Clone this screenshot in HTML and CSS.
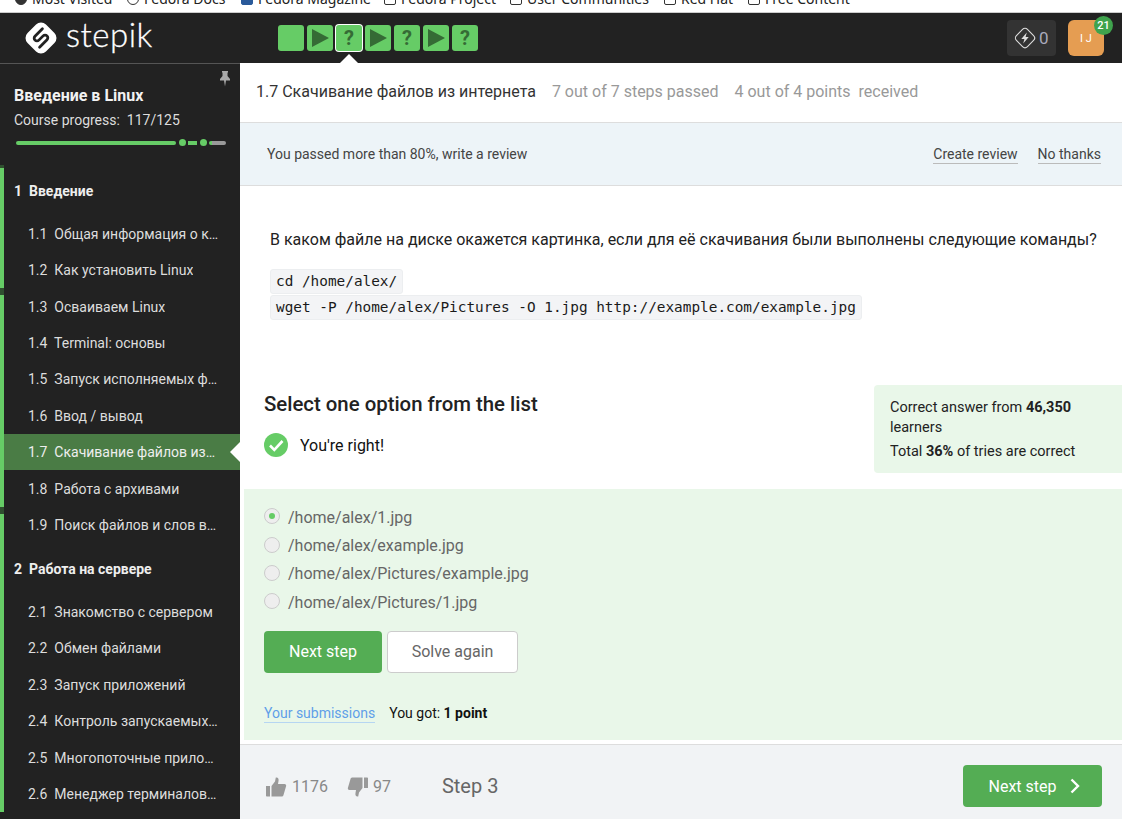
FILE: index.html
```html
<!DOCTYPE html>
<html lang="en">
<head>
<meta charset="utf-8">
<title>Stepik</title>
<link rel="stylesheet" href="styles.css">
</head>
<body>
<div class="bookmarks">
  <span class="bm bm-1"><i class="bm-ico solid"></i>Most Visited</span>
  <span class="bm bm-2"><i class="bm-ico round"></i>Fedora Docs</span>
  <span class="bm bm-3"><i class="bm-ico blue"></i>Fedora Magazine</span>
  <span class="bm bm-4"><i class="bm-ico box"></i>Fedora Project</span>
  <span class="bm bm-5"><i class="bm-ico box"></i>User Communities</span>
  <span class="bm bm-6"><i class="bm-ico box"></i>Red Hat</span>
  <span class="bm bm-7"><i class="bm-ico box"></i>Free Content</span>
</div>
<header class="topbar">
  <div class="logo">
    <svg class="logo-mark" width="32" height="32" viewBox="0 0 32 32">
      <rect x="3" y="3" width="26" height="26" rx="7" transform="rotate(45 16 16)" fill="#fff"/>
      <path d="M7.500 -5.500 H-3 a2.750 2.750 0 0 0 0 5.500 H3 a2.750 2.750 0 0 1 0 5.500 H-7.500" fill="none" stroke="#222" stroke-width="2.800" stroke-linecap="round" transform="translate(16 16) rotate(-45)"/>
    </svg>
    <span class="logo-text">stepik</span>
  </div>
  <nav class="steps">
    <span class="step"></span>
    <span class="step"><svg width="20" height="20" viewBox="0 0 20 20"><path d="M2 1 L19 10 L2 19 Z" fill="#356b35"/></svg></span>
    <span class="step current">?</span>
    <span class="step"><svg width="20" height="20" viewBox="0 0 20 20"><path d="M2 1 L19 10 L2 19 Z" fill="#356b35"/></svg></span>
    <span class="step">?</span>
    <span class="step"><svg width="20" height="20" viewBox="0 0 20 20"><path d="M2 1 L19 10 L2 19 Z" fill="#356b35"/></svg></span>
    <span class="step">?</span>
  </nav>
  <div class="top-right">
    <div class="energy">
      <svg width="22" height="22" viewBox="0 0 22 22" fill="none" stroke="#ddd" stroke-width="1.100">
        <rect x="3.200" y="3.200" width="15.600" height="15.600" rx="3.500" transform="rotate(45 11 11)"/>
        <path d="M12.800 5.500 L7.300 12 L10.400 12 L9.200 16.500 L14.700 10 L11.600 10 Z" fill="#ddd" stroke="none"/>
      </svg>
      <span>0</span>
    </div>
    <div class="avatar">I J<span class="badge">21</span></div>
  </div>
</header>
<div class="layout">
  <aside class="sidebar">
    <svg class="pin" width="12" height="16" viewBox="0 0 12 16"><path d="M3 0 H9 V1.500 H8.500 V5 L11 8 V9.500 H7 L6 15.500 L5 9.500 H1 V8 L3.500 5 V1.500 H3 Z" fill="#aaa"/></svg>
    <div class="course">
      <h1 class="course-title">Введение в Linux</h1>
      <div class="course-progress">Course progress:&nbsp; 117/125</div>
      <div class="progress">
        <span class="pg pg-a"></span><span class="dot"></span><span class="pg pg-b"></span><span class="dot"></span><span class="pg pg-c"></span><span class="pg pg-d"></span>
      </div>
    </div>
    <ul class="toc">
      <li class="sec first">1&nbsp; Введение</li>
      <li class="row"><span>1.1&nbsp; Общая информация о курсе</span></li>
      <li class="row split"><span>1.2&nbsp; Как установить Linux</span></li>
      <li class="row"><span>1.3&nbsp; Осваиваем Linux</span></li>
      <li class="row"><span>1.4&nbsp; Terminal: основы</span></li>
      <li class="row"><span>1.5&nbsp; Запуск исполняемых файлов</span></li>
      <li class="row"><span>1.6&nbsp; Ввод / вывод</span></li>
      <li class="row active"><span>1.7&nbsp; Скачивание файлов из интернета</span></li>
      <li class="row split"><span>1.8&nbsp; Работа с архивами</span></li>
      <li class="row"><span>1.9&nbsp; Поиск файлов и слов в них</span></li>
      <li class="sec">2&nbsp; Работа на сервере</li>
      <li class="row"><span>2.1&nbsp; Знакомство с сервером</span></li>
      <li class="row"><span>2.2&nbsp; Обмен файлами</span></li>
      <li class="row"><span>2.3&nbsp; Запуск приложений</span></li>
      <li class="row"><span>2.4&nbsp; Контроль запускаемых программ</span></li>
      <li class="row"><span>2.5&nbsp; Многопоточные приложения</span></li>
      <li class="row"><span>2.6&nbsp; Менеджер терминалов tmux</span></li>
    </ul>
  </aside>
  <main class="main">
    <div class="titlebar">
      <span class="lesson">1.7 Скачивание файлов из интернета</span>
      <span class="meta">7 out of 7 steps passed</span>
      <span class="meta">4 out of 4 points&nbsp; received</span>
    </div>
    <div class="banner">
      <span>You passed more than 80%, write a review</span>
      <div class="banner-links"><a>Create review</a><a>No thanks</a></div>
    </div>
    <section class="question">
      <p class="q-text">В каком файле на диске окажется картинка, если для её скачивания были выполнены следующие команды?</p>
      <div class="code">cd /home/alex/</div>
      <div class="code">wget -P /home/alex/Pictures -O 1.jpg http://example.com/example.jpg</div>
    </section>
    <section class="quiz-head">
      <div>
        <h2 class="quiz-title">Select one option from the list</h2>
        <div class="right">
          <svg width="24" height="24" viewBox="0 0 24 24"><circle cx="12" cy="12" r="12" fill="#66cc66"/><path d="M6 12.500 L10.300 16.800 L18.500 8" fill="none" stroke="#fff" stroke-width="2.600"/></svg>
          <span>You're right!</span>
        </div>
      </div>
      <div class="stats">
        <p>Correct answer from <b>46,350</b> learners</p>
        <p class="stats-2">Total <b>36%</b> of tries are correct</p>
      </div>
    </section>
    <section class="answer">
      <div class="opt"><i class="radio on"></i>/home/alex/1.jpg</div>
      <div class="opt"><i class="radio"></i>/home/alex/example.jpg</div>
      <div class="opt"><i class="radio"></i>/home/alex/Pictures/example.jpg</div>
      <div class="opt"><i class="radio"></i>/home/alex/Pictures/1.jpg</div>
      <div class="actions">
        <button class="btn primary">Next step</button>
        <button class="btn ghost">Solve again</button>
      </div>
      <div class="result"><a>Your submissions</a><span>You got: <b>1 point</b></span></div>
    </section>
    <footer class="foot">
      <svg class="thumb" width="22" height="22" viewBox="0 0 22 22"><path d="M1 10 H5 V20.500 H1.800 a.8 .8 0 0 1 -.8 -.8 Z M6.500 10 L10 5.500 L10.800 1.500 C13 1 14 3 13.500 5 L13 8 H19.500 C21 8 21.500 9.500 21 10.500 L18.500 19 C18.200 20 17.500 20.500 16.500 20.500 H6.500 Z" fill="#999"/></svg>
      <span class="count">1176</span>
      <svg class="thumb down" width="22" height="22" viewBox="0 0 22 22"><path d="M21 12 H17 V1.500 H20.200 a.8 .8 0 0 1 .8 .8 Z M15.500 12 L12 16.500 L11.200 20.500 C9 21 8 19 8.500 17 L9 14 H2.500 C1 14 .5 12.500 1 11.500 L3.500 3 C3.800 2 4.500 1.500 5.500 1.500 H15.500 Z" fill="#999"/></svg>
      <span class="count tight">97</span>
      <span class="step-no">Step 3</span>
      <button class="btn primary next">Next step
        <svg width="12" height="16" viewBox="0 0 12 16"><path d="M2.500 1.500 L9 8 L2.500 14.500" fill="none" stroke="#fff" stroke-width="2.400"/></svg>
      </button>
    </footer>
  </main>
</div>
</body>
</html>
```
FILE: styles.css
```css
* { box-sizing: border-box; }
html, body { margin: 0; padding: 0; }
body {
  width: 1122px;
  height: 819px;
  overflow: hidden;
  font-family: Roboto, "Liberation Sans", sans-serif;
  background: #fff;
  color: #222;
}

/* browser bookmarks strip, cut by the screenshot */
.bookmarks {
  height: 13px;
  border-bottom: 1px solid #ccc;
  background: #fff;
  overflow: hidden;
  display: flex;
  font: 14px/14px "Noto Sans", sans-serif;
  color: #222;
  padding-left: 15px;
}
.bm { display: flex; align-items: center; gap: 5px; margin-top: -8px; height: 14px; white-space: nowrap; }
.bm-ico { width: 12px; height: 12px; border: 1px solid #333; border-radius: 2px; display: block; }
.bm-ico.round { border-radius: 50%; }
.bm-ico.solid { background: #333; border-radius: 50%; }
.bm-ico.blue { background: #2a5a9a; border-color: #2a5a9a; }
.bm-1 { width: 112px; }
.bm-2 { width: 114px; }
.bm-3 { width: 143px; }
.bm-4 { width: 126px; }
.bm-5 { width: 154px; }
.bm-6 { width: 84px; }

/* top bar */
.topbar {
  height: 50px;
  background: #222;
  display: flex;
  align-items: center;
  position: relative;
}
.logo { display: flex; align-items: center; width: 278px; padding-left: 25px; gap: 9px; }
.logo-mark { display: block; margin-top: -1px; }
.logo-text { font: 300 33px/1 Lato, sans-serif; color: #fff; letter-spacing: .5px; margin-top: -7px; -webkit-text-stroke: .3px #fff; }
.steps { display: flex; gap: 3px; }
.step {
  width: 26px;
  height: 26px;
  background: #66cc66;
  border-radius: 3px;
  display: flex;
  align-items: center;
  justify-content: center;
  font-size: 20px;
  font-weight: 700;
  color: #356b35;
}
.step.current { box-shadow: 0 0 0 1px #fff; position: relative; }
.step.current::after {
  content: "";
  position: absolute;
  left: 3px;
  top: 29px;
  border: 10px solid transparent;
  border-top: 0;
  border-bottom-color: #fff;
}
.top-right { margin-left: auto; display: flex; gap: 12px; padding-right: 18px; }
.energy {
  width: 49px;
  height: 36px;
  background: #333;
  border-radius: 4px;
  display: flex;
  align-items: center;
  padding-left: 7px;
  gap: 3px;
  color: #aab;
  font-size: 17px;
}
.avatar {
  width: 36px;
  height: 36px;
  border-radius: 6px;
  background: #e59d52;
  color: #fff;
  font-size: 11px;
  display: flex;
  align-items: center;
  justify-content: center;
  position: relative;
}
.badge {
  position: absolute;
  top: -4px;
  right: -9px;
  width: 19px;
  height: 19px;
  border-radius: 50%;
  background: #3fa34d;
  font-size: 11px;
  font-weight: 500;
  display: flex;
  align-items: center;
  justify-content: center;
}

/* page columns */
.layout { display: flex; height: 756px; }

/* sidebar */
.sidebar {
  width: 240px;
  flex: none;
  background: #222;
  color: #eee;
  border-top: 1px solid #555;
  position: relative;
  overflow: hidden;
}
.pin { position: absolute; top: 7px; right: 9px; }
.course { padding: 22px 14px 0; height: 101px; }
.course-title { margin: 0; font-size: 16px; line-height: 19px; font-weight: 700; color: #f2f2f2; }
.course-progress { margin-top: 5px; font-size: 14px; line-height: 20px; color: #ddd; }
.progress { display: flex; align-items: center; margin: 9px 0 0 2px; height: 7px; }
.pg { height: 4px; border-radius: 2px; background: #66cc66; }
.pg-a { width: 160px; }
.dot { width: 7px; height: 7px; border-radius: 50%; background: #66cc66; margin: 0 2.500px; }
.pg-b { width: 9px; border-radius: 0; }
.pg-c { width: 3px; border-radius: 2px 0 0 2px; }
.pg-d { width: 14px; background: #999; border-radius: 0 2px 2px 0; }
.toc { list-style: none; margin: 0; padding: 0; border-left: 4px solid #66cc66; }
.toc .sec {
  height: 50.700px;
  padding: 16.700px 0 0 10px;
  font-size: 14px;
  line-height: 18px;
  font-weight: 700;
  color: #eee;
  position: relative;
}
.toc .sec.first { padding-top: 17px; }
.toc .sec.first::before {
  content: "";
  position: absolute;
  left: -4px;
  top: 0;
  width: 4px;
  height: 3px;
  background: #2f4f2f;
}
.row {
  height: 36.400px;
  display: flex;
  align-items: center;
  padding: 0 21px 0 24px;
  font-size: 14px;
  color: #ddd;
  position: relative;
}
.row > span { white-space: nowrap; overflow: hidden; text-overflow: ellipsis; }
.row.split::after {
  content: "";
  position: absolute;
  left: -4px;
  bottom: -7px;
  width: 4px;
  height: 7px;
  background: #2f4f2f;
}
.row.active { background: #4a7c45; color: #eee; padding-right: 24px; }
.row.active::before {
  content: "";
  position: absolute;
  right: 0;
  top: 8px;
  border: 10px solid transparent;
  border-left: 0;
  border-right-color: #fff;
}

/* main column */
.main { flex: 1; min-width: 0; display: flex; flex-direction: column; overflow: hidden; }
.titlebar {
  height: 60px;
  border-bottom: 1px solid #ddd;
  display: flex;
  align-items: center;
  padding: 0 16px 2px;
  gap: 16px;
  font-size: 16px;
}
.lesson { color: #333; }
.meta { color: #999; }
.banner {
  height: 63px;
  background: #edf4f8;
  border-bottom: 1px solid #ddd;
  display: flex;
  align-items: center;
  justify-content: space-between;
  padding: 0 21px 0 27px;
  font-size: 14px;
  color: #444;
}
.banner-links { display: flex; gap: 20px; margin-top: 2px; }
.banner-links a { border-bottom: 1px solid #bbb; line-height: 16px; padding-bottom: 1px; }
.question { padding: 44px 0 0 30px; height: 199px; }
.q-text { margin: 0 0 19px; font-size: 16px; line-height: 20px; color: #222; white-space: nowrap; }
.code {
  width: fit-content;
  height: 25px;
  margin-bottom: 1px;
  padding: 0 5px;
  background: #f3f4f6;
  border: 1px solid #eceef0;
  border-radius: 3px;
  font: 14.380px/23px "DejaVu Sans Mono", monospace;
  color: #1a1a1a;
  white-space: pre;
}
.quiz-head { display: flex; justify-content: space-between; align-items: flex-start; padding-left: 24px; height: 104px; }
.quiz-title { margin: 6px 0 0; font-size: 20.370px; line-height: 26px; font-weight: 500; color: #222; }
.right { display: flex; align-items: center; gap: 12px; margin-top: 16px; font-size: 16px; color: #111; }
.right svg { display: block; }
.stats {
  width: 248px;
  height: 88px;
  background: #e9f7e9;
  border-radius: 4px 0 0 4px;
  padding: 13px 40px 0 16px;
  font-size: 14.500px;
  line-height: 20px;
  color: #222;
}
.stats p { margin: 0; }
.stats .stats-2 { margin-top: 4px; }
.stats b { font-weight: 700; }
.answer {
  margin-left: 4px;
  height: 251px;
  background: #e9f7e9;
  padding: 14px 20px 0;
}
.opt { display: flex; align-items: center; gap: 8px; height: 28.400px; font-size: 16px; color: #666; }
.radio {
  width: 16px;
  height: 16px;
  border-radius: 50%;
  background: #eee;
  border: 1px solid #ccc;
  display: flex;
  align-items: center;
  justify-content: center;
  margin-top: -2px;
}
.radio.on::after { content: ""; width: 6px; height: 6px; border-radius: 50%; background: #66cc66; }
.actions { display: flex; gap: 5px; margin-top: 14px; }
.btn {
  height: 42px;
  border-radius: 4px;
  font: 16px Roboto, sans-serif;
  border: 0;
  padding: 0;
}
.primary { background: #54ad54; color: #fff; width: 118px; }
.ghost { background: #fff; color: #666; border: 1px solid #ccc; width: 131px; }
.result { display: flex; gap: 14px; margin-top: 31px; font-size: 14px; line-height: 18px; color: #111; }
.result a { color: #5f9fe8; border-bottom: 1px solid #b6d6f2; }
.result b { font-weight: 700; }
.foot {
  margin-top: 4px;
  height: 75px;
  border-top: 1px solid #ddd;
  background: #f1f3f5;
  display: flex;
  align-items: center;
  padding: 8px 20px 0 25px;
  font-size: 16px;
  color: #888;
}
.thumb { display: block; margin-top: 1px; }
.thumb.down { margin-left: 19px; }
.count { margin-left: 5px; }
.count.tight { margin-left: 4px; margin-right: 1px; }
.step-no { margin-left: 50px; font-size: 20px; color: #666; }
.next { margin-left: auto; width: 139px; display: flex; align-items: center; justify-content: center; gap: 12px; padding-left: 4px; }
```
